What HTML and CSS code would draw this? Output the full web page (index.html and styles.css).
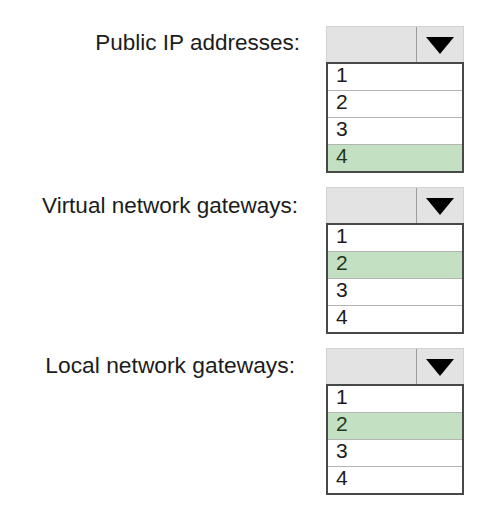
FILE: index.html
```html
<!DOCTYPE html>
<html lang="en">
<head>
    <meta charset="UTF-8">
    <title>Gateway Counts</title>
    <link rel="stylesheet" href="styles.css">
</head>
<body>

    <div class="answer-area">
        <div class="field">
            <div class="field-label">Public IP addresses:</div>
            <div class="dropdown">
                <div class="dropdown-head">
                    <div class="dropdown-value"></div>
                    <div class="dropdown-btn">
                        <svg width="28" height="17" viewBox="0 0 28 17"><polygon points="0,0 28,0 14,17" fill="#000"/></svg>
                    </div>
                </div>
                <ul class="options">
                    <li>1</li>
                    <li>2</li>
                    <li>3</li>
                    <li class="selected">4</li>
                </ul>
            </div>
        </div>

        <div class="field">
            <div class="field-label virtual">Virtual network gateways:</div>
            <div class="dropdown">
                <div class="dropdown-head">
                    <div class="dropdown-value"></div>
                    <div class="dropdown-btn">
                        <svg width="28" height="17" viewBox="0 0 28 17"><polygon points="0,0 28,0 14,17" fill="#000"/></svg>
                    </div>
                </div>
                <ul class="options">
                    <li>1</li>
                    <li class="selected">2</li>
                    <li>3</li>
                    <li>4</li>
                </ul>
            </div>
        </div>

        <div class="field">
            <div class="field-label local">Local network gateways:</div>
            <div class="dropdown">
                <div class="dropdown-head">
                    <div class="dropdown-value"></div>
                    <div class="dropdown-btn">
                        <svg width="28" height="17" viewBox="0 0 28 17"><polygon points="0,0 28,0 14,17" fill="#000"/></svg>
                    </div>
                </div>
                <ul class="options">
                    <li>1</li>
                    <li class="selected">2</li>
                    <li>3</li>
                    <li>4</li>
                </ul>
            </div>
        </div>
    </div>

</body>
</html>
```

FILE: styles.css
```css
body {
    margin: 0;
    background: #fff;
    font-family: "Liberation Sans", Arial, sans-serif;
    color: #1c1c1c;
}

.answer-area {
    padding-top: 26px;
    display: flex;
    flex-direction: column;
    gap: 14px;
}

.field {
    display: grid;
    grid-template-columns: 300px 138px;
    column-gap: 26px;
    align-items: start;
}

.field-label {
    height: 34px;
    display: flex;
    align-items: center;
    justify-content: flex-end;
    font-size: 22.5px;
    white-space: nowrap;
}

    .field-label.virtual {
        padding-right: 2px;
        padding-top: 2px;
    }

    .field-label.local {
        padding-right: 5px;
        font-size: 22.8px;
    }

.dropdown-head {
    display: flex;
    height: 35px;
    background: #e3e3e3;
    border: 1px solid #d2d2d2;
    border-bottom: none;
}

.dropdown-value {
    flex: 1;
    border-right: 1px solid #9c9c9c;
}

.dropdown-btn {
    width: 46px;
    display: flex;
    align-items: center;
    justify-content: center;
    padding-top: 2px;
}

.options {
    list-style: none;
    margin: 0;
    padding: 0;
    border: 2px solid #484848;
    background: #fff;
}

    .options li {
        height: 26px;
        line-height: 22px;
        font-size: 21px;
        padding-left: 8px;
        border-top: 1px solid #b4b4b4;
    }

        .options li:first-child {
            border-top: none;
        }

        .options li.selected {
            background: #c4e0c2;
            color: #1f3a1f;
        }
```
